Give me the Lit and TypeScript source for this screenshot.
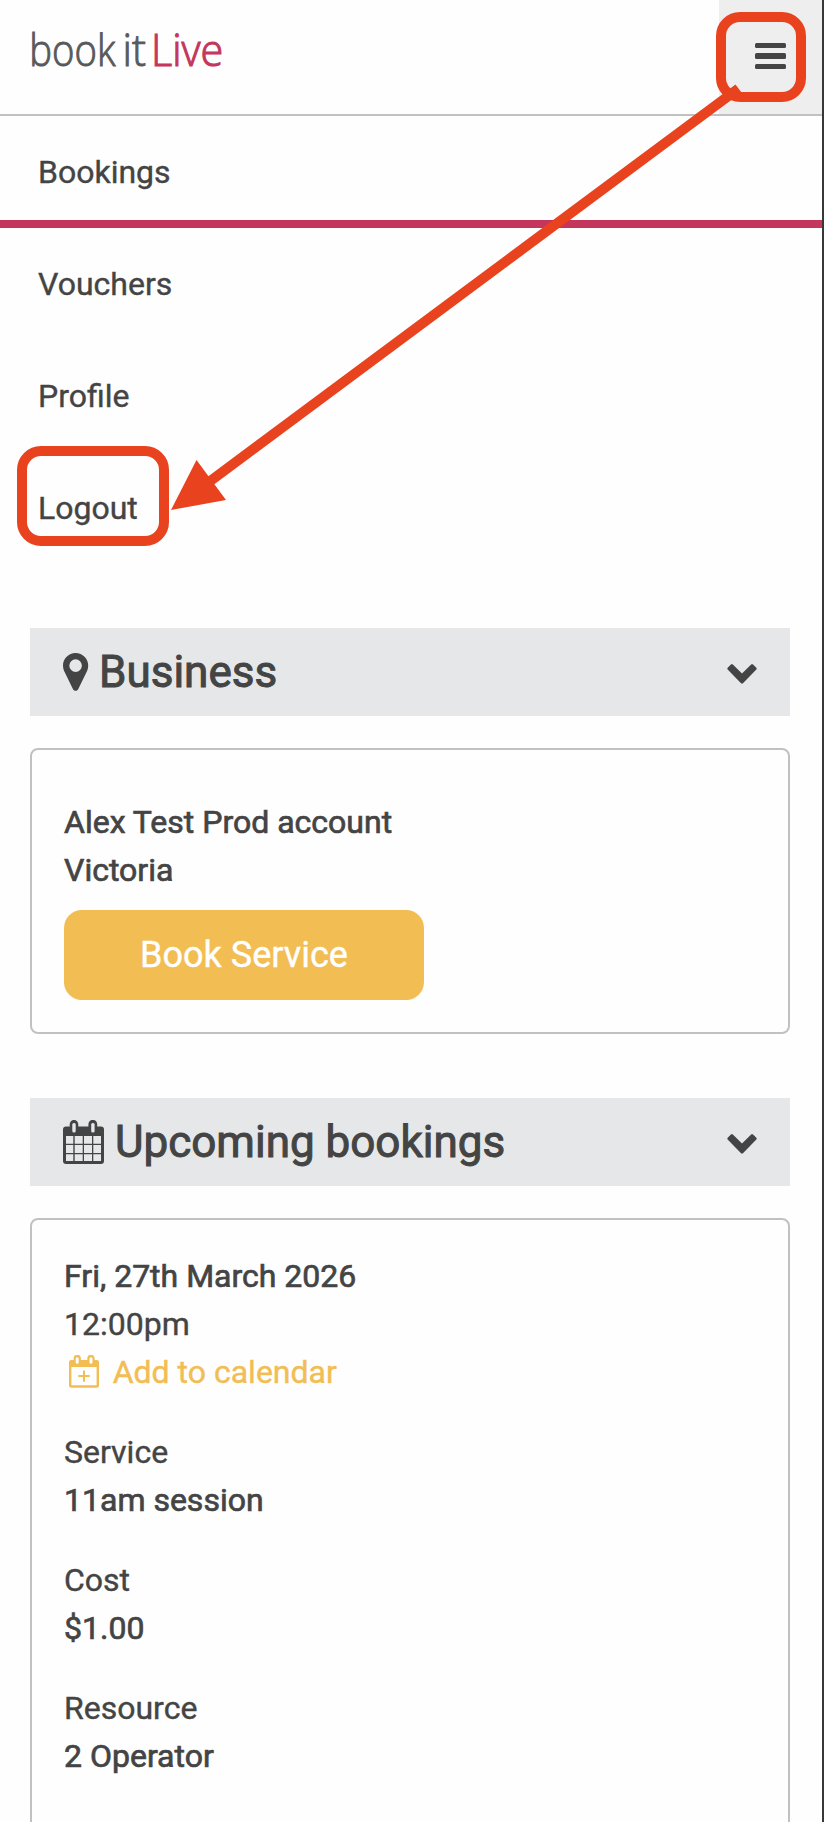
import { LitElement, html, svg, css } from "lit";
import { customElement } from "lit/decorators.js";

const chevron = html`<svg class="chevron" width="30" height="20" viewBox="0 0 30 20">
  <path d="M4.200.2h1.400L15 9.400 24.400.2h1.400l3.800 3.700v1.400L15.700 19.400h-1.400L.4 5.300V3.900Z" />
</svg>`;

const pin = html`<svg class="icon" width="26" height="38" viewBox="0 0 26 38">
  <path fill-rule="evenodd" d="M12.6 0C5.6 0 0 5.6 0 12.6c0 2 .3 3.700 1 5.200l8.900 18.200c.5 1.100 1.500 1.800 2.700 1.800s2.200-.7 2.700-1.800l8.900-18.200c.7-1.500 1-3.200 1-5.200C25.200 5.600 19.600 0 12.600 0Zm0 6.300a6.300 6.300 0 1 1 0 12.600a6.300 6.300 0 0 1 0-12.600Z" />
</svg>`;

const calendar = html`<svg class="icon" width="41" height="44" viewBox="0 0 41 44">
  <path fill-rule="evenodd" d="M3 6.500H6.700V4.200A4.200 4.200 0 0 1 15.300 4.200V6.500H25.400V4.200A4.200 4.200 0 0 1 34.200 4.200V6.500H38A3 3 0 0 1 41 9.500V41A3 3 0 0 1 38 44H3A3 3 0 0 1 0 41V9.500A3 3 0 0 1 3 6.500Z" />
  <g class="cells">
    <path d="M3 16h7.300v7.700H3zM11.700 16h8v7.700h-8zM21 16h8v7.700h-8zM30.300 16h7.700v7.700h-7.700zM3 25h7.300v8H3zM11.700 25h8v8h-8zM21 25h8v8h-8zM30.300 25h7.700v8h-7.700zM3 34.300h7.300V41H3zM11.700 34.300h8V41h-8zM21 34.300h8V41h-8zM30.300 34.300h7.700V41h-7.700z" />
    <rect x="9.300" y="3" width="3.400" height="9.500" rx="1.500" />
    <rect x="28.200" y="3" width="3.400" height="9.500" rx="1.500" />
  </g>
</svg>`;

const calendarPlus = html`<svg class="plus" width="30" height="33" viewBox="0 0 30 33">
  <path fill-rule="evenodd" d="M2.300 5H4.600V3.600A3.600 3.600 0 0 1 11.900 3.600V5H18.300V3.600A3.600 3.600 0 0 1 25.600 3.600V5H27.700A2.300 2.300 0 0 1 30 7.300V30.400A2.300 2.300 0 0 1 27.700 32.700H2.300A2.300 2.300 0 0 1 0 30.400V7.300A2.300 2.300 0 0 1 2.300 5ZM2.400 12V30.300H27.600V12ZM8.200 2.300A1.500 1.500 0 0 0 6.700 3.800V7.200A1.500 1.500 0 0 0 9.700 7.200V3.800A1.500 1.500 0 0 0 8.200 2.300ZM22 2.300A1.500 1.500 0 0 0 20.500 3.800V7.200A1.500 1.500 0 0 0 23.500 7.200V3.800A1.500 1.500 0 0 0 22 2.300Z" />
  <path d="M14 15.500h2v4.600h4.700v2H16v4.700h-2v-4.700H9.300v-2H14z" />
</svg>`;

@customElement("app-root")
export class AppRoot extends LitElement {
  static styles = css`
    :host {
      display: block;
      position: relative;
      box-sizing: border-box;
      width: 824px;
      height: 1822px;
      overflow: hidden;
      border-right: 2px solid #3a3837;
      background: #fefefe;
      color: #444;
      font: 400 32px/48px Roboto, sans-serif;
      -webkit-text-stroke: 0.4px currentColor;
    }
    svg { display: block; flex: none; }
    .header {
      display: flex;
      justify-content: space-between;
      height: 114px;
      border-bottom: 2px solid #c1c1c1;
    }
    .logo { font-family: "Open Sans", sans-serif; font-weight: 300; font-size: 45px; -webkit-text-stroke: 0; }
    .logo .grey { fill: #58595b; stroke: #58595b; stroke-width: 1; }
    .logo .pink { fill: #c4365b; stroke: #c4365b; stroke-width: 1.1; }
    .toggle {
      display: flex;
      flex-direction: column;
      gap: 5px;
      box-sizing: border-box;
      width: 103px;
      padding: 43px 36px 0;
      background: #eee;
    }
    .line { height: 5.400px; border-radius: 1.500px; background: #444; }
    .item {
      box-sizing: border-box;
      height: 112px;
      padding: 32px 38px 0;
    }
    .current { border-bottom: 8px solid #c4365b; }
    .strong { -webkit-text-stroke-width: 0.700px; }
    .content { padding: 64px 32px 0 30px; }
    .bar {
      display: flex;
      align-items: center;
      box-sizing: border-box;
      height: 88px;
      padding: 0 33px;
      background: #e6e7e9;
      font-size: 44px;
    }
    .bar .strong { flex: 1; -webkit-text-stroke-width: 1px; }
    .icon, .chevron { fill: #444; }
    .chevron { position: relative; top: 2px; }
    .pin-gap { margin-right: 10px; }
    .cal-gap { margin-right: 11px; }
    .cells { fill: #e6e7e9; }
    .card {
      box-sizing: border-box;
      margin: 32px 0 64px;
      padding: 32px;
      border: 2px solid #c1c1c1;
      border-radius: 8px;
    }
    .business { height: 286px; padding-top: 48px; }
    .booking { height: 700px; }
    .button {
      display: flex;
      align-items: center;
      justify-content: center;
      width: 360px;
      height: 90px;
      margin-top: 16px;
      border-radius: 18px;
      background: #f2bd53;
      color: #fff;
      font-size: 36px;
    }
    .add { display: flex; align-items: center; color: #f2bd53; padding-left: 4.700px; gap: 14px; }
    .plus { fill: #f2bd53; position: relative; top: -1px; }
    .group { margin-top: 32px; }
    .overlay {
      position: absolute;
      inset: 0;
      fill: none;
      stroke: #e8421e;
      stroke-width: 10;
      pointer-events: none;
    }
    .head { fill: #e8421e; stroke: none; }
  `;

  render() {
    const details = [
      ["Service", "11am session"],
      ["Cost", "$1.00"],
      ["Resource", "2 Operator"],
    ];
    return html`
      <div class="header">
        <svg class="logo" width="260" height="100" viewBox="0 0 260 100">
          <text class="grey" transform="translate(29.300 66) scale(.85 1)">book</text>
          <text class="grey" transform="translate(122.500 66) scale(.93 1)">it</text>
          <text class="pink" transform="translate(151 66) scale(.92 1)">Live</text>
        </svg>
        <div class="toggle"><div class="line"></div><div class="line"></div><div class="line"></div></div>
      </div>
      <div class="item current"><span>Bookings</span></div>
      <div class="item">Vouchers</div>
      <div class="item">Profile</div>
      <div class="item">Logout</div>
      <div class="content">
        <div class="bar"><span class="pin-gap">${pin}</span><span class="strong">Business</span>${chevron}</div>
        <div class="card business">
          <div class="strong">Alex Test Prod account</div>
          <div class="strong">Victoria</div>
          <div class="button"><span>Book Service</span></div>
        </div>
        <div class="bar"><span class="cal-gap">${calendar}</span><span class="strong">Upcoming bookings</span>${chevron}</div>
        <div class="card booking">
          <div class="strong">Fri, 27th March 2026</div>
          <div>12:00pm</div>
          <div class="add">${calendarPlus}<span>Add to calendar</span></div>
          ${details.map(([label, value]) => html`<div class="group"><div>${label}</div><div class="strong">${value}</div></div>`)}
        </div>
      </div>
      <svg class="overlay" width="822" height="600" viewBox="0 0 822 600">
        ${svg`<rect x="721" y="17" width="80" height="80" rx="19" />
        <rect x="22" y="451" width="142" height="90" rx="19" />
        <path d="M738.500 88.500 209 482" />
        <path class="head" d="M171 510 196.500 460 226 500Z" />`}
      </svg>
    `;
  }
}
